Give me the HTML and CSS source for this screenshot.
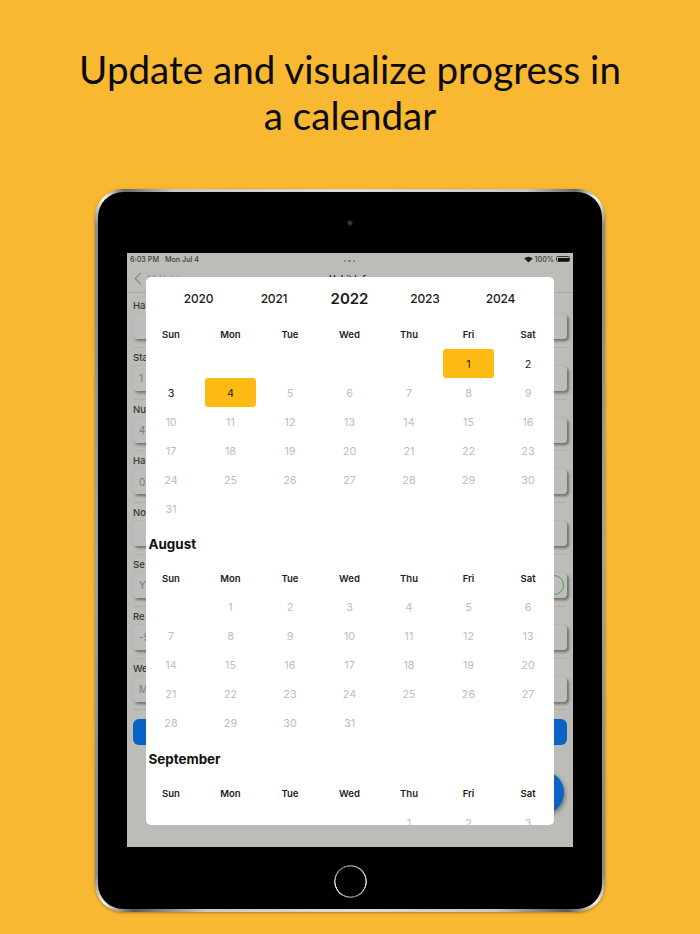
FILE: index.html
```html
<!DOCTYPE html>
<html lang="en">
<head>
<meta charset="utf-8">
<title>Update and visualize progress in a calendar</title>
<link rel="stylesheet" href="styles.css">
</head>
<body>
<h1 class="headline">Update and visualize progress in<br>a calendar</h1>
<div class="device">
  <div class="device-body">
    <div class="bezel-top"><span class="camera"></span></div>
    <div class="screen">
      <div class="status-bar">
        <span class="status-time">6:03 PM</span><span class="status-date">Mon Jul 4</span>
        <span class="status-dots"><i></i><i></i><i></i></span>
        <span class="status-right">
          <svg class="wifi" viewBox="0 0 16 12" width="9" height="7"><path d="M8 11.5 0.6 4.2a10.6 10.6 0 0 1 14.8 0z" fill="#1c1c1c"/></svg>
          <span>100%</span>
          <span class="battery"><span class="battery-fill"></span></span>
        </span>
      </div>
      <div class="nav-bar">
        <svg class="back" viewBox="0 0 8 14" width="8" height="13"><path d="M7 1 1 7l6 6" fill="none" stroke="#85877f" stroke-width="1.3"/></svg>
        <span class="nav-back-text">All Habits</span>
        <span class="nav-title">Habit Info</span>
      </div>
      <div class="form">
        <div class="field"><div class="field-label">Ha</div><div class="field-input"></div></div>
        <div class="field"><div class="field-label">Sta</div><div class="field-input">1</div></div>
        <div class="field"><div class="field-label">Nu</div><div class="field-input">4</div></div>
        <div class="field"><div class="field-label">Ha</div><div class="field-input">0</div></div>
        <div class="field"><div class="field-label">No</div><div class="field-input"></div></div>
        <div class="field"><div class="field-label">Se</div><div class="field-input">Y<span class="toggle-ring"></span></div></div>
        <div class="field"><div class="field-label">Re</div><div class="field-input">-5</div></div>
        <div class="field"><div class="field-label">We</div><div class="field-input">M</div></div>
        <div class="save-button"></div>
      </div>
      <div class="fab"></div>
      <div class="modal">
        <div class="years">
          <span>2020</span><span>2021</span><span class="year-current">2022</span><span>2023</span><span>2024</span>
        </div>
        <div class="cal-grid weekdays"><span>Sun</span><span>Mon</span><span>Tue</span><span>Wed</span><span>Thu</span><span>Fri</span><span>Sat</span></div>
        <div class="cal-grid days">
          <span></span><span></span><span></span><span></span><span></span><span class="day-on">1</span><span class="day-active">2</span>
          <span class="day-active">3</span><span class="day-on">4</span><span>5</span><span>6</span><span>7</span><span>8</span><span>9</span>
          <span>10</span><span>11</span><span>12</span><span>13</span><span>14</span><span>15</span><span>16</span>
          <span>17</span><span>18</span><span>19</span><span>20</span><span>21</span><span>22</span><span>23</span>
          <span>24</span><span>25</span><span>26</span><span>27</span><span>28</span><span>29</span><span>30</span>
          <span>31</span>
        </div>
        <h2 class="month">August</h2>
        <div class="cal-grid weekdays"><span>Sun</span><span>Mon</span><span>Tue</span><span>Wed</span><span>Thu</span><span>Fri</span><span>Sat</span></div>
        <div class="cal-grid days">
          <span></span><span>1</span><span>2</span><span>3</span><span>4</span><span>5</span><span>6</span>
          <span>7</span><span>8</span><span>9</span><span>10</span><span>11</span><span>12</span><span>13</span>
          <span>14</span><span>15</span><span>16</span><span>17</span><span>18</span><span>19</span><span>20</span>
          <span>21</span><span>22</span><span>23</span><span>24</span><span>25</span><span>26</span><span>27</span>
          <span>28</span><span>29</span><span>30</span><span>31</span>
        </div>
        <h2 class="month month-last">September</h2>
        <div class="cal-grid weekdays"><span>Sun</span><span>Mon</span><span>Tue</span><span>Wed</span><span>Thu</span><span>Fri</span><span>Sat</span></div>
        <div class="cal-grid days">
          <span></span><span></span><span></span><span></span><span>1</span><span>2</span><span>3</span>
        </div>
      </div>
    </div>
    <div class="bezel-bottom"><span class="home-button"></span></div>
  </div>
</div>
</body>
</html>
```
FILE: styles.css
```css
html, body {
  margin: 0;
  padding: 0;
}
body {
  width: 700px;
  height: 934px;
  overflow: hidden;
  background: #f9b831;
  font-family: Inter, "Liberation Sans", sans-serif;
}
.headline {
  margin: 0;
  padding-top: 46px;
  font-family: Lato, "Noto Sans", sans-serif;
  font-size: 38.6px;
  line-height: 46px;
  font-weight: 400;
  text-align: center;
  color: #0c0a05;
}
.device {
  box-sizing: border-box;
  width: 510px;
  height: 723px;
  margin: 51px auto 0;
  padding: 3px;
  border-radius: 28px;
  background: conic-gradient(
    #dcdcdc 0deg, #c8c8c8 26deg, #6a6a6a 32deg, #fff 35deg, #8a8a8a 38deg,
    #a4a4a4 90deg, #8a8a8a 142deg, #f4f4f4 145deg, #5a5a5a 149deg, #c8c8c8 158deg,
    #dcdcdc 180deg, #c8c8c8 202deg, #5a5a5a 211deg, #f4f4f4 215deg, #8a8a8a 218deg,
    #a4a4a4 270deg, #8a8a8a 322deg, #fff 325deg, #6a6a6a 328deg, #c8c8c8 334deg, #dcdcdc 360deg
  );
  box-shadow: 0 1px 3px rgba(90, 60, 0, .5);
}
.device-body {
  display: flex;
  flex-direction: column;
  align-items: center;
  height: 100%;
  border-radius: 25px;
  background: #000;
}
.bezel-top {
  display: flex;
  align-items: center;
  justify-content: center;
  height: 61px;
  flex: none;
}
.camera {
  width: 6px;
  height: 6px;
  border-radius: 50%;
  background: radial-gradient(circle, #1f4f52 25%, #16191b 55%);
}
.screen {
  position: relative;
  width: 446px;
  height: 594px;
  flex: none;
  overflow: hidden;
  background: #bcbdb9;
  color: #232420;
}
.status-bar {
  display: flex;
  align-items: center;
  height: 12px;
  padding: 0 3px;
  font-size: 7.2px;
  font-weight: 500;
  color: #3a3b38;
}
.status-date {
  margin-left: 6px;
}
.status-dots {
  position: absolute;
  left: 217px;
  top: 7px;
  display: flex;
  gap: 2px;
}
.status-dots i {
  width: 2.4px;
  height: 2.4px;
  border-radius: 50%;
  background: #7d7e7a;
}
.status-right {
  display: flex;
  align-items: center;
  gap: 2px;
  margin-left: auto;
}
.battery {
  display: block;
  box-sizing: border-box;
  width: 14px;
  height: 6px;
  padding: .5px;
  border: .5px solid #333;
  border-radius: 1.5px;
}
.battery-fill {
  display: block;
  height: 100%;
  background: #111;
}
.nav-bar {
  position: relative;
  display: flex;
  align-items: center;
  height: 28px;
  padding-left: 7px;
  box-sizing: border-box;
  border-bottom: 1px solid #a8a9a5;
  font-size: 9px;
}
.nav-back-text {
  margin-left: 4px;
  color: #8a8c85;
}
.nav-title {
  position: absolute;
  left: 0;
  right: 0;
  text-align: center;
  font-weight: 600;
}
.form {
  display: flex;
  flex-direction: column;
  padding: 3px 6px 0;
}
.field {
  box-sizing: border-box;
  height: 51.8px;
  padding-top: 3px;
  border-bottom: 1px solid #aeafab;
}
.field:last-of-type {
  border-bottom: 0;
}
.field-label {
  height: 14px;
  line-height: 14px;
  font-size: 9.5px;
  font-weight: 500;
  white-space: nowrap;
  color: #35362f;
}
.field-input {
  position: relative;
  box-sizing: border-box;
  display: flex;
  align-items: center;
  height: 25px;
  margin-top: 1px;
  padding-left: 6px;
  border-radius: 4px;
  background: #bdbebb;
  box-shadow: 0 0 1px #8f908c, 2px 2px 3px #6b6c67;
  font-size: 10px;
  color: #7b7c78;
}
.toggle-ring {
  position: absolute;
  right: 3px;
  top: 2px;
  box-sizing: border-box;
  width: 20px;
  height: 20px;
  border: 1px solid #3f9f4e;
  border-radius: 50%;
}
.save-button {
  height: 26px;
  margin-top: 9px;
  border-radius: 6px;
  background: #0b62c6;
}
.fab {
  position: absolute;
  left: 394px;
  top: 518px;
  width: 43px;
  height: 43px;
  border-radius: 50%;
  background: #0b62c6;
  box-shadow: 1px 2px 5px rgba(0, 0, 0, .45);
}
.modal {
  position: absolute;
  left: 18.5px;
  top: 24px;
  width: 408px;
  height: 548px;
  overflow: hidden;
  border-radius: 5px;
  background: #fff;
  color: #1a1a1a;
}
.years {
  display: grid;
  grid-template-columns: repeat(5, 75.5px);
  justify-content: center;
  align-items: center;
  height: 43px;
  font-size: 12px;
  font-weight: 500;
  letter-spacing: -.2px;
  text-align: center;
}
.years .year-current {
  font-size: 15px;
  font-weight: 600;
  letter-spacing: 0;
}
.cal-grid {
  display: grid;
  grid-template-columns: repeat(7, 51px);
  column-gap: 8.5px;
  grid-auto-rows: 29px;
}
.cal-grid span {
  display: flex;
  align-items: center;
  justify-content: center;
  border-radius: 3px;
}
.weekdays {
  font-size: 9.5px;
  font-weight: 600;
  color: #1c1c1c;
}
.days {
  font-size: 10.8px;
  color: #bdbdbd;
}
.days span {
  box-sizing: border-box;
  padding-top: 1px;
}
.days .day-active {
  color: #222;
}
.days .day-on {
  background: #fdba13;
  color: #2a2203;
}
.month {
  box-sizing: border-box;
  display: flex;
  align-items: center;
  height: 40.5px;
  margin: 0;
  padding: 1.5px 0 0 3px;
  font-size: 13.4px;
  font-weight: 700;
  color: #111;
}
.month-last {
  height: 41.5px;
}
.bezel-bottom {
  display: flex;
  justify-content: center;
  width: 100%;
  padding-top: 18px;
}
.home-button {
  box-sizing: border-box;
  width: 33px;
  height: 33px;
  border-radius: 50%;
  padding: 1.5px;
  background: conic-gradient(#8a8a8a, #e8e8e8 90deg, #777 170deg, #ededed 250deg, #777 320deg, #8a8a8a);
  -webkit-mask: radial-gradient(circle, transparent 14.8px, #000 15.2px);
  mask: radial-gradient(circle, transparent 14.8px, #000 15.2px);
}
```
